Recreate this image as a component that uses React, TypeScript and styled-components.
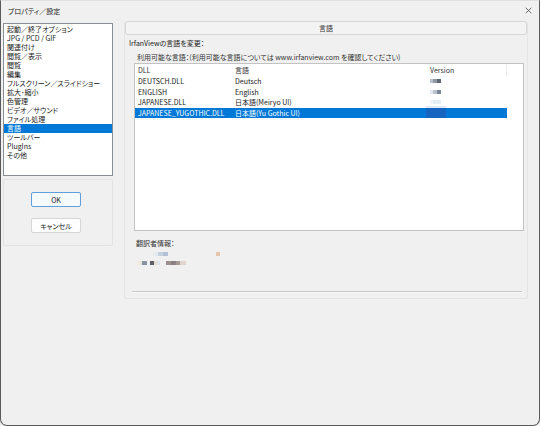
import styled, { createGlobalStyle } from 'styled-components';

const GlobalStyle = createGlobalStyle`
  html, body {
    margin: 0;
    padding: 0;
    background: #f0f0f0;
  }
  * {
    box-sizing: border-box;
  }
  body {
    font-family: 'Noto Sans CJK JP', 'Noto Sans', sans-serif;
    font-size: 7px;
    font-feature-settings: 'palt';
    color: #1a1a1a;
  }
`;

const categories = [
  '起動／終了オプション',
  'JPG / PCD / GIF',
  '関連付け',
  '閲覧／表示',
  '閲覧',
  '編集',
  'フルスクリーン／スライドショー',
  '拡大･縮小',
  '色管理',
  'ビデオ／サウンド',
  'ファイル処理',
  '言語',
  'ツールバー',
  'PlugIns',
  'その他',
];

type Pixel = [number, string];

const languages: { dll: string; name: string; version: Pixel[] }[] = [
  {
    dll: 'DEUTSCH.DLL',
    name: 'Deutsch',
    version: [
      [3, '#b9c1ca'],
      [4, '#8f99a5'],
      [4, '#5f6a77'],
    ],
  },
  {
    dll: 'ENGLISH',
    name: 'English',
    version: [
      [3, '#e2e8ef'],
      [4, '#b8c3cf'],
      [4, '#7a8797'],
    ],
  },
  {
    dll: 'JAPANESE.DLL',
    name: '日本語(Meiryo UI)',
    version: [
      [3, '#f2f6fa'],
      [8, '#e3edf6'],
    ],
  },
  {
    dll: 'JAPANESE_YUGOTHIC.DLL',
    name: '日本語(Yu Gothic UI)',
    version: [],
  },
];

const translatorRows: { indent: number; gap: number; pixels: Pixel[] }[] = [
  {
    indent: 16,
    gap: 4,
    pixels: [
      [5, '#e6e9ef'],
      [5, '#c4cfdf'],
      [5, '#b3c0d6'],
      [48, 'transparent'],
      [4, '#e4c6ae'],
    ],
  },
  {
    indent: 0,
    gap: 5,
    pixels: [
      [3, '#efe9df'],
      [2, '#e9e6e0'],
      [5, '#8a95a3'],
      [3, '#eef0f2'],
      [4, '#5d5f66'],
      [3, '#e6dccf'],
      [3, '#dce6f0'],
      [6, 'transparent'],
      [5, '#9c8f8e'],
      [5, '#8a7f82'],
      [4, '#a79a96'],
      [6, '#e0d5d0'],
    ],
  },
];

const Frame = styled.div`
  width: 540px;
  height: 426px;
  background: #f0f0f0;
  border: 1px solid #5a5a5a;
  border-top-color: #e0e0e0;
  border-radius: 0 0 7px 7px;
  display: flex;
  flex-direction: column;
  overflow: hidden;
`;

const TitleBar = styled.div`
  height: 19px;
  display: flex;
  align-items: center;
  justify-content: space-between;
  padding: 0 7px 0 7px;
`;

const TitleText = styled.div`
  font-size: 7px;
  color: #222;
`;

const CloseIcon = styled.svg`
  width: 7px;
  height: 7px;
`;

const Body = styled.div`
  display: flex;
  gap: 11px;
  padding: 0 11px 0 2px;
`;

const LeftColumn = styled.div`
  width: 111px;
  padding-top: 3px;
  display: flex;
  flex-direction: column;
  gap: 3px;
`;

const CategoryList = styled.div`
  height: 153px;
  background: #fff;
  border: 1px solid #8a8f96;
  padding: 1px 0;
  display: flex;
  flex-direction: column;
`;

const CategoryItem = styled.div<{ $selected?: boolean }>`
  height: 9px;
  line-height: 9px;
  padding-left: 3px;
  white-space: nowrap;
  background: ${({ $selected }) => ($selected ? '#0078d7' : 'transparent')};
  color: ${({ $selected }) => ($selected ? '#fff' : '#1a1a1a')};
`;

const ButtonPanel = styled.div`
  height: 67px;
  border: 1px solid #e2e2e2;
  border-radius: 2px;
  display: flex;
  flex-direction: column;
  align-items: flex-start;
  padding: 12px 0 0 27px;
  gap: 11px;
`;

const DialogButton = styled.button<{ $primary?: boolean }>`
  width: 50px;
  height: 15px;
  font-family: inherit;
  font-size: 7px;
  font-feature-settings: 'palt';
  color: #1a1a1a;
  padding: 0;
  border-radius: 2px;
  border: 1px solid ${({ $primary }) => ($primary ? '#5fa0dc' : '#d6d6d6')};
  background: ${({ $primary }) => ($primary ? '#f7fafd' : '#fdfdfd')};
`;

const RightColumn = styled.div`
  flex: 1;
  padding-top: 1px;
`;

const PagePanel = styled.div`
  height: 278px;
  border: 1px solid #e4e4e4;
  border-top: none;
  border-radius: 3px;
  display: flex;
  flex-direction: column;
`;

const PageHeader = styled.div`
  height: 14px;
  line-height: 12px;
  text-align: center;
  border: 1px solid #d6d6d6;
  border-radius: 3px;
  background: #f3f3f3;
  color: #333;
`;

const PageContent = styled.div`
  display: flex;
  flex-direction: column;
  padding: 3px 3px 0 4px;
`;

const GroupTitle = styled.div`
  height: 10px;
  line-height: 10px;
`;

const SubLabel = styled.div`
  margin: 5px 0 0 8px;
  height: 9px;
  line-height: 9px;
  color: #333;
`;

const ListView = styled.div`
  margin: 1px 0 0 5px;
  width: 390px;
  height: 168px;
  background: #fff;
  border: 1px solid #c3c3c3;
`;

const Grid = styled.div`
  display: grid;
  grid-template-columns: 97px 195px 80px;
`;

const HeaderCell = styled.div<{ $last?: boolean }>`
  height: 12px;
  line-height: 12px;
  padding-left: 3px;
  color: #333;
  border-right: ${({ $last }) => ($last ? '1px solid #ececec' : 'none')};
`;

const Row = styled.div<{ $selected?: boolean }>`
  display: contents;
  & > div {
    background: ${({ $selected }) => ($selected ? '#0078d7' : 'transparent')};
    color: ${({ $selected }) => ($selected ? '#fff' : '#1a1a1a')};
  }
`;

const Cell = styled.div`
  height: 10.5px;
  line-height: 10.5px;
  padding-left: 3px;
  white-space: nowrap;
  overflow: visible;
  display: flex;
  align-items: center;
`;

const PixelRun = styled.span`
  display: inline-flex;
  height: 4px;
`;

const PixelBlock = styled.span<{ $w: number; $c: string }>`
  display: inline-block;
  width: ${({ $w }) => $w}px;
  height: 100%;
  background: ${({ $c }) => $c};
`;

const SelectedMask = styled.span`
  display: inline-block;
  margin-left: -4px;
  width: 20px;
  height: 12px;
  margin-top: -2px;
  background: #1565c0;
  border-top: 2px solid #dfeaf6;
`;

const TranslatorLabel = styled.div`
  margin: 7px 0 0 7px;
  height: 10px;
  line-height: 10px;
  color: #333;
`;

const TranslatorRow = styled.div<{ $indent: number; $gap: number }>`
  margin: ${({ $gap }) => $gap}px 0 0 ${({ $indent }) => 8 + $indent}px;
  height: 4px;
  display: flex;
`;

const Separator = styled.div`
  margin: 26px 0 0 3px;
  width: 390px;
  height: 2px;
  border-top: 1px solid #c8c8c8;
  border-bottom: 1px solid #fafafa;
`;

const Pixels = ({ data }: { data: Pixel[] }) => (
  <PixelRun>
    {data.map(([w, c], i) => (
      <PixelBlock key={i} $w={w} $c={c} />
    ))}
  </PixelRun>
);

const App = () => {
  return (
    <>
      <GlobalStyle />
      <Frame>
        <TitleBar>
          <TitleText>プロパティ／設定</TitleText>
          <CloseIcon viewBox="0 0 10 10">
            <path d="M1 1 L9 9 M9 1 L1 9" stroke="#333" strokeWidth="1" />
          </CloseIcon>
        </TitleBar>
        <Body>
          <LeftColumn>
            <CategoryList>
              {categories.map((c) => (
                <CategoryItem key={c} $selected={c === '言語'}>
                  {c}
                </CategoryItem>
              ))}
            </CategoryList>
            <ButtonPanel>
              <DialogButton $primary>OK</DialogButton>
              <DialogButton>キャンセル</DialogButton>
            </ButtonPanel>
          </LeftColumn>
          <RightColumn>
            <PagePanel>
              <PageHeader>言語</PageHeader>
              <PageContent>
                <GroupTitle>IrfanViewの言語を変更：</GroupTitle>
                <SubLabel>
                  利用可能な言語：(利用可能な言語については www.irfanview.com を確認してください)
                </SubLabel>
                <ListView>
                  <Grid>
                    <HeaderCell>DLL</HeaderCell>
                    <HeaderCell>言語</HeaderCell>
                    <HeaderCell $last>Version</HeaderCell>
                    {languages.map((l, i) => (
                      <Row key={l.dll} $selected={i === languages.length - 1}>
                        <Cell>{l.dll}</Cell>
                        <Cell>{l.name}</Cell>
                        <Cell>
                          {i === languages.length - 1 ? (
                            <SelectedMask />
                          ) : (
                            <Pixels data={l.version} />
                          )}
                        </Cell>
                      </Row>
                    ))}
                  </Grid>
                </ListView>
                <TranslatorLabel>翻訳者情報：</TranslatorLabel>
                {translatorRows.map((r, i) => (
                  <TranslatorRow key={i} $indent={r.indent} $gap={r.gap}>
                    <Pixels data={r.pixels} />
                  </TranslatorRow>
                ))}
                <Separator />
              </PageContent>
            </PagePanel>
          </RightColumn>
        </Body>
      </Frame>
    </>
  );
};

export default App;
